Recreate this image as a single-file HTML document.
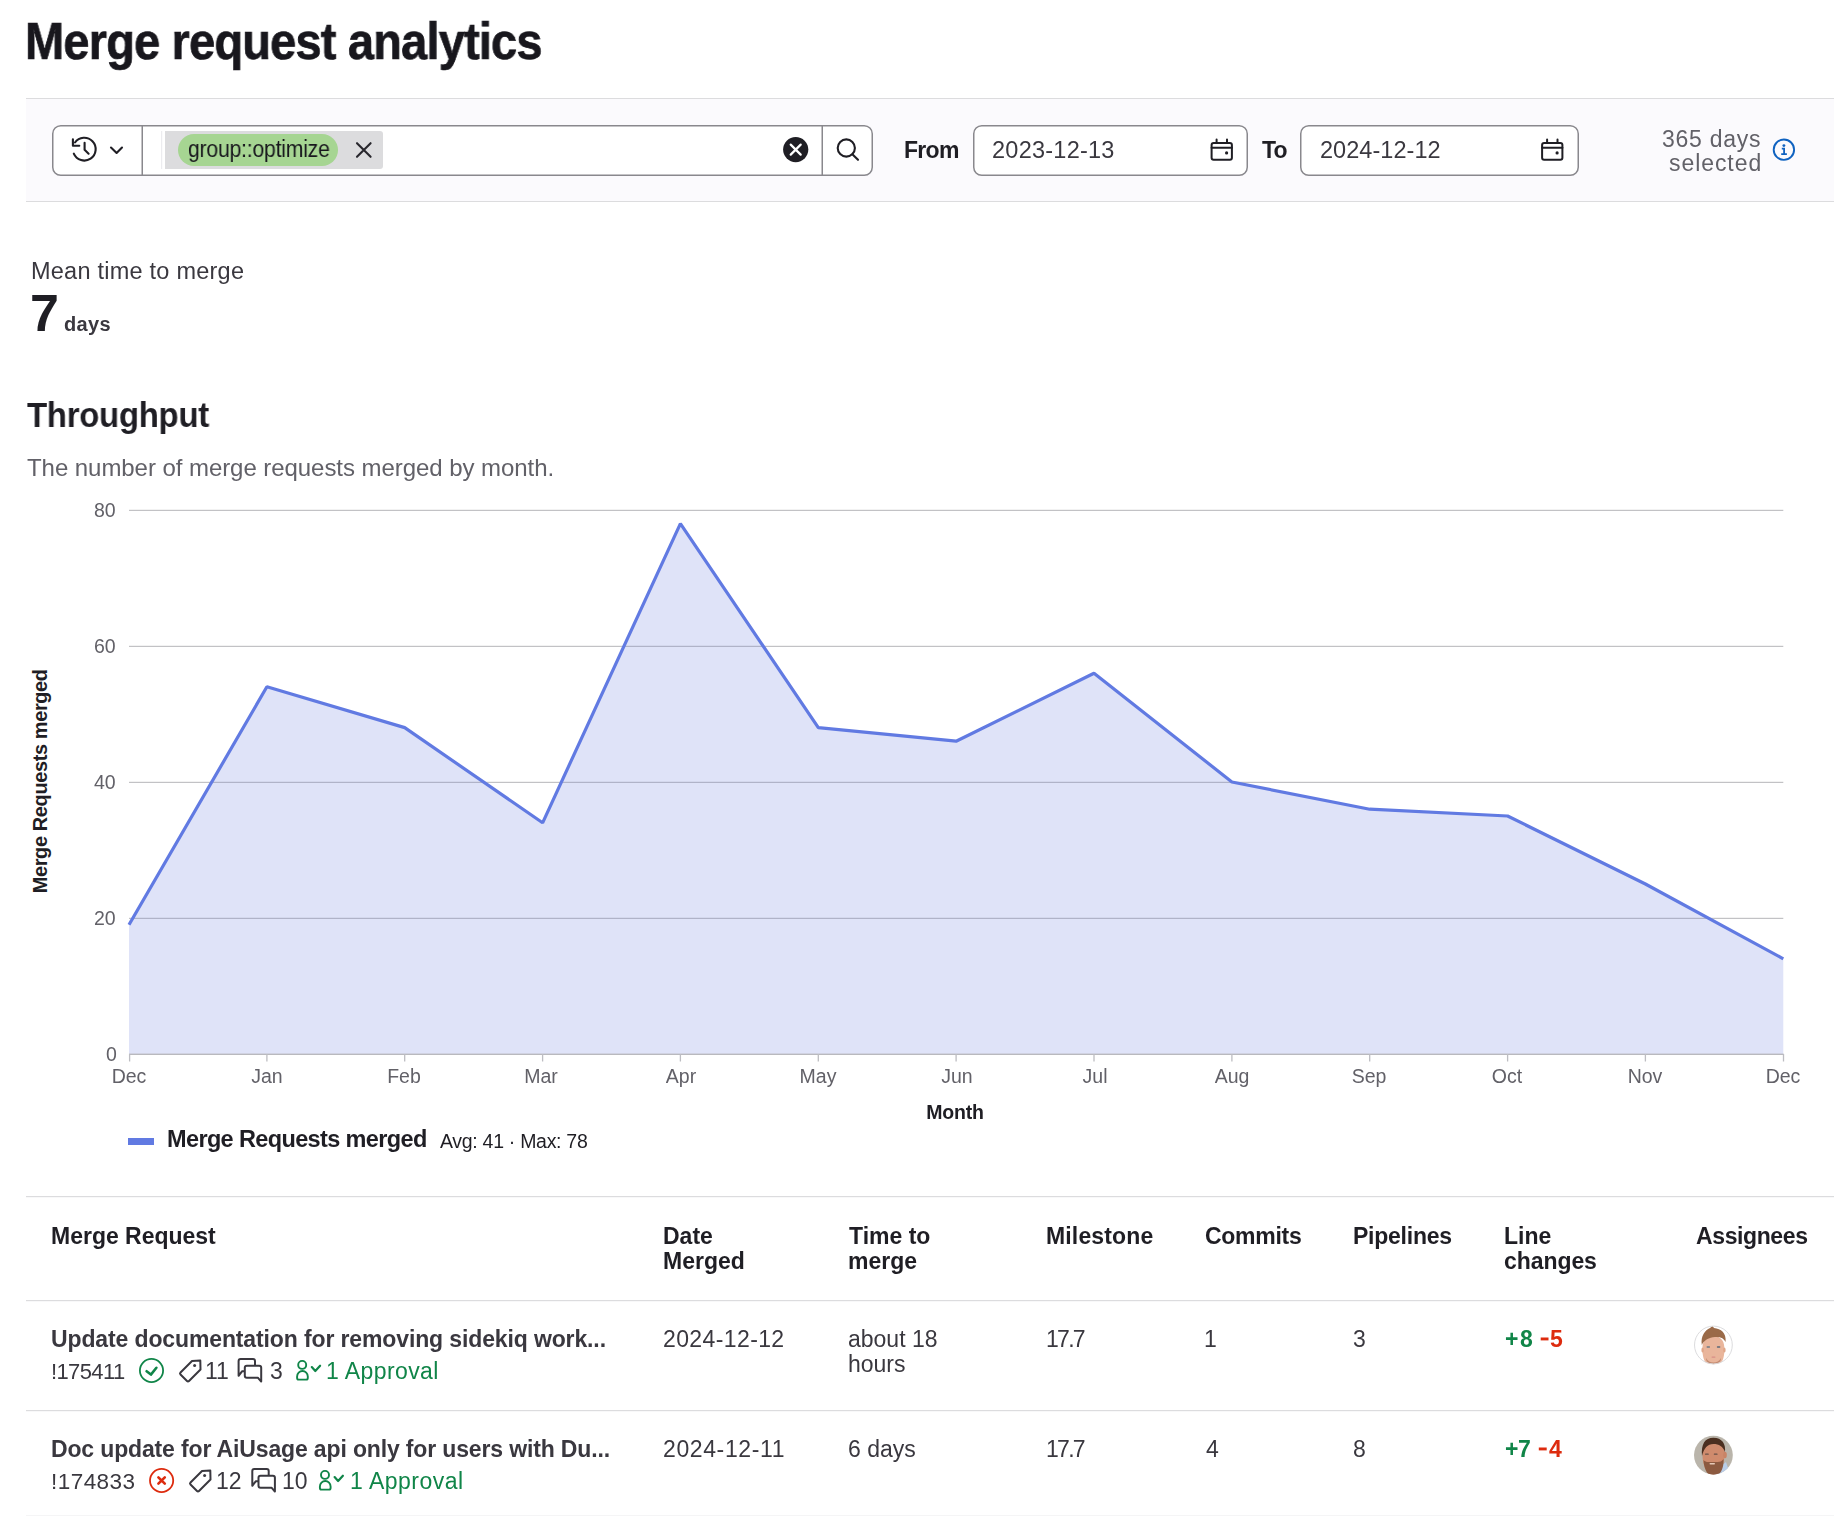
<!DOCTYPE html>
<html><head><meta charset="utf-8"><title>Merge request analytics</title>
<style>
html,body{margin:0;padding:0;background:#fff;}
body{width:1848px;height:1516px;position:relative;overflow:hidden;font-family:"Liberation Sans",sans-serif;}
.t{position:absolute;white-space:nowrap;line-height:1;will-change:transform;}
svg.bg{position:absolute;left:0;top:0;}
</style></head><body>
<svg class="bg" width="1848" height="1516" viewBox="0 0 1848 1516">
  <!-- filter bar -->
  <rect x="26" y="98" width="1808" height="104" fill="#fbfafd"/>
  <rect x="26" y="98" width="1808" height="1" fill="#dcdcde"/>
  <rect x="26" y="201" width="1808" height="1" fill="#dcdcde"/>
  <!-- filtered search box -->
  <rect x="52.75" y="125.75" width="819.5" height="49.5" rx="8" fill="#fff" stroke="#89888d" stroke-width="1.5"/>
  <rect x="141.5" y="126" width="1.5" height="49" fill="#89888d"/>
  <rect x="821.5" y="126" width="1.5" height="49" fill="#89888d"/>
  <!-- history icon -->
  <g fill="none" stroke="#1f1e24" stroke-width="2.1" stroke-linecap="round" stroke-linejoin="round">
    <path d="M73.8 153.7 A11.4 11.4 0 1 0 75 142.5"/>
    <path d="M72.9 139.3 V145.7 H79.3"/>
    <path d="M84.6 142.7 V149.7 L88.6 153.7"/>
    <path d="M111 147.6 L116.6 153 L122 147.6"/>
  </g>
  <!-- token -->
  <rect x="161" y="131" width="1.2" height="38" fill="#ececef"/>
  <rect x="165" y="131" width="218" height="38" rx="3" fill="#dcdcde"/>
  <rect x="165" y="131" width="6" height="38" fill="#dcdcde"/>
  <rect x="178" y="134" width="160" height="32" rx="16" fill="#a6d592"/>
  <g stroke="#28272d" stroke-width="2.1" stroke-linecap="round">
    <path d="M357 143.2 L370.6 156.8 M370.6 143.2 L357 156.8"/>
  </g>
  <!-- clear icon -->
  <circle cx="795.7" cy="149.6" r="12.6" fill="#1f1e24"/>
  <path d="M790.7 144.6 L800.7 154.6 M800.7 144.6 L790.7 154.6" stroke="#fff" stroke-width="2.2" stroke-linecap="round"/>
  <!-- search icon -->
  <g fill="none" stroke="#1f1e24" stroke-width="2.1" stroke-linecap="round">
    <circle cx="846.3" cy="148" r="8.6"/>
    <path d="M852.6 154.4 L858 159.8"/>
  </g>
  <!-- date inputs -->
  <rect x="973.75" y="125.75" width="273.5" height="49.5" rx="8" fill="#fff" stroke="#89888d" stroke-width="1.5"/>
  <rect x="1300.75" y="125.75" width="277.5" height="49.5" rx="8" fill="#fff" stroke="#89888d" stroke-width="1.5"/>
  <g fill="none" stroke="#1f1e24" stroke-width="2" stroke-linecap="round" stroke-linejoin="round">
    <rect x="1211.6" y="142.9" width="20.3" height="16.9" rx="2"/>
    <path d="M1211.6 147.7 H1231.9 M1216.6 139.6 V142.5 M1227 139.6 V142.5"/>
    <rect x="1542.1" y="142.9" width="20.3" height="16.9" rx="2"/>
    <path d="M1542.1 147.7 H1562.4 M1547.1 139.6 V142.5 M1557.5 139.6 V142.5"/>
  </g>
  <circle cx="1226.6" cy="152.9" r="1.6" fill="#1f1e24"/>
  <circle cx="1557.1" cy="152.9" r="1.6" fill="#1f1e24"/>
  <!-- info icon -->
  <circle cx="1783.9" cy="149.7" r="10.2" fill="none" stroke="#0f62c0" stroke-width="1.9"/>
  <circle cx="1783.9" cy="145.6" r="1.45" fill="#0f62c0"/>
  <path d="M1781.8 148.6 H1784.1 V154.2 M1781.2 154.2 H1786.9" fill="none" stroke="#0f62c0" stroke-width="1.8"/>

  <!-- chart gridlines -->
  <g fill="#bcbcbf">
    <rect x="129" y="509.8" width="1654.3" height="1.1"/>
    <rect x="129" y="645.8" width="1654.3" height="1.1"/>
    <rect x="129" y="781.8" width="1654.3" height="1.1"/>
    <rect x="129" y="917.8" width="1654.3" height="1.1"/>
  </g>
  <polygon fill="#dfe3f8" points="129,1054 129.0,924.8 266.9,686.8 404.7,727.6 542.6,822.8 680.4,523.6 818.3,727.6 956.1,741.2 1094.0,673.2 1231.9,782.0 1369.7,809.2 1507.6,816.0 1645.4,884.0 1783.3,958.8 1783.3,1054"/>
  <!-- gridlines inside area (darker) -->
  <clipPath id="areaclip"><polygon points="129,1054 129.0,924.8 266.9,686.8 404.7,727.6 542.6,822.8 680.4,523.6 818.3,727.6 956.1,741.2 1094.0,673.2 1231.9,782.0 1369.7,809.2 1507.6,816.0 1645.4,884.0 1783.3,958.8 1783.3,1054"/></clipPath>
  <g fill="#abadc3" clip-path="url(#areaclip)">
    <rect x="129" y="645.8" width="1654.3" height="1.1"/>
    <rect x="129" y="781.8" width="1654.3" height="1.1"/>
    <rect x="129" y="917.8" width="1654.3" height="1.1"/>
  </g>
  <g fill="#b9b9be">
    <rect x="129" y="1053.6" width="1654.6" height="1.4"/>
  </g>
  <g stroke="#bdbdc2" stroke-width="1.3">
    <path d="M129.6 1054 V1061.5 M266.9 1054 V1061.5 M404.7 1054 V1061.5 M542.6 1054 V1061.5 M680.4 1054 V1061.5 M818.3 1054 V1061.5 M956.1 1054 V1061.5 M1094 1054 V1061.5 M1231.9 1054 V1061.5 M1369.7 1054 V1061.5 M1507.6 1054 V1061.5 M1645.4 1054 V1061.5 M1783.5 1054 V1061.5"/>
  </g>
  <polyline fill="none" stroke="#617ae2" stroke-width="3.2" stroke-linejoin="bevel" points="129.0,924.8 266.9,686.8 404.7,727.6 542.6,822.8 680.4,523.6 818.3,727.6 956.1,741.2 1094.0,673.2 1231.9,782.0 1369.7,809.2 1507.6,816.0 1645.4,884.0 1783.3,958.8"/>
  <text x="46.6" y="781.3" transform="rotate(-90 46.6 781.3)" text-anchor="middle" font-family="Liberation Sans" font-weight="700" font-size="20" letter-spacing="-0.4" fill="#1f1e24">Merge Requests merged</text>
  <!-- legend swatch -->
  <rect x="128" y="1138" width="26" height="7" fill="#617ae2"/>

  <!-- table lines -->
  <rect x="26" y="1196" width="1808" height="1.2" fill="#dcdcde"/>
  <rect x="26" y="1300" width="1808" height="1.2" fill="#dcdcde"/>
  <rect x="26" y="1410" width="1808" height="1.2" fill="#dcdcde"/>
  <rect x="26" y="1515" width="1808" height="1" fill="#f5f5f6"/>

  <!-- minus signs -->
  <rect x="1540.7" y="1337.5" width="7.8" height="2.9" fill="#dd2b0e"/>
  <rect x="1538.8" y="1447.5" width="7.9" height="2.9" fill="#dd2b0e"/>
  <!-- row 1 meta icons -->
  <g fill="none" stroke="#108548" stroke-width="1.8">
    <circle cx="151.5" cy="1370.5" r="11.6"/>
  </g>
  <path d="M146.6 1371.2 L150.9 1374.6 L156.4 1367.8" fill="none" stroke="#108548" stroke-width="2.6" stroke-linecap="round" stroke-linejoin="round"/>
  <g id="lbl1">
  <path d="M200.3 1360.5 L192 1361 L180.5 1372.5 Q179.5 1373.5 180.5 1374.5 L187 1381 Q188 1382 189 1381 L200.5 1369.5 Z" fill="none" stroke="#3a383f" stroke-width="2" stroke-linejoin="round"/>
  <circle cx="194.6" cy="1365.6" r="1.5" fill="#3a383f"/>
  </g>
  <g id="cmt1" fill="none" stroke="#3a383f" stroke-width="2" stroke-linejoin="round">
    <path d="M244.8 1371.3 H242 L238.6 1375.8 V1361 Q238.6 1359 240.6 1359 H253 Q255 1359 255 1361 V1365.7"/>
    <path d="M246.8 1365.7 H259.2 Q261.2 1365.7 261.2 1367.7 V1381.6 L257.8 1377.7 H246.8 Q244.8 1377.7 244.8 1375.7 V1367.7 Q244.8 1365.7 246.8 1365.7 Z"/>
  </g>
  <g id="apr1" fill="none" stroke="#108548" stroke-width="1.9" stroke-linecap="round" stroke-linejoin="round">
    <circle cx="302.2" cy="1364.9" r="4.0"/>
    <path d="M297.1 1376.4 A5.35 5.35 0 0 1 307.8 1376.4 V1378 Q307.8 1379.6 306.2 1379.6 H298.7 Q297.1 1379.6 297.1 1378 Z"/>
    <path d="M311.8 1367.1 L315.3 1371 L320.1 1365.7" stroke-width="2.2"/>
  </g>

  <!-- row 2 meta icons -->
  <g fill="none" stroke="#dd2b0e" stroke-width="1.8">
    <circle cx="161.6" cy="1480.5" r="11.6"/>
  </g>
  <path d="M158.4 1477.3 L164.8 1483.7 M164.8 1477.3 L158.4 1483.7" fill="none" stroke="#dd2b0e" stroke-width="2.6" stroke-linecap="round"/>
  <use href="#lbl1" transform="translate(10 110)"/>
  <use href="#cmt1" transform="translate(13.7 110)"/>
  <use href="#apr1" transform="translate(22.8 110)"/>

  <!-- avatars -->
  <defs>
    <clipPath id="av1"><circle cx="1713.4" cy="1345" r="19.2"/></clipPath>
    <clipPath id="av2"><circle cx="1713.4" cy="1455.1" r="19.4"/></clipPath>
  </defs>
  <circle cx="1713.4" cy="1345" r="19.2" fill="#fff"/>
  <g clip-path="url(#av1)">
    <path d="M1702.5 1347 C1702 1356 1704 1362 1708 1364.5 H1719 C1723 1362 1724.8 1356 1724.3 1347 C1724 1340 1720 1336 1713.4 1336 C1707 1336 1703 1340 1702.5 1347 Z" fill="#e9b59b"/>
    <ellipse cx="1702.6" cy="1350" rx="1.2" ry="2.6" fill="#dfa688"/>
    <ellipse cx="1724.4" cy="1350" rx="1.2" ry="2.6" fill="#dfa688"/>
    <path d="M1706 1358 C1709 1364 1718 1364 1721 1358 C1721 1362 1718 1364.5 1713.4 1364.5 C1709 1364.5 1706 1362 1706 1358 Z" fill="#c48c72"/>
    <path d="M1701.8 1345 C1700.5 1336 1705 1330 1710 1328 L1712.5 1326 L1714 1328 C1721 1328.5 1726.5 1333 1725.6 1342 C1724 1338.5 1720.5 1336.5 1715 1337 C1709 1337.5 1704 1340 1701.8 1345 Z" fill="#9a6a48"/>
    <rect x="1706.5" y="1346.3" width="3.6" height="1.4" rx="0.7" fill="#6d7a86"/>
    <rect x="1716.8" y="1346.3" width="3.6" height="1.4" rx="0.7" fill="#5a6878"/>
    <rect x="1711.5" y="1356.5" width="4" height="1.2" rx="0.6" fill="#d88f86"/>
  </g>
  <circle cx="1713.4" cy="1345" r="18.9" fill="none" stroke="#dcdcde" stroke-width="1"/>
  <g clip-path="url(#av2)">
    <rect x="1690" y="1430" width="50" height="50" fill="#bab5ab"/>
    <path d="M1716 1470 L1726 1462 L1732 1480 H1712 Z" fill="#b9cee8"/>
    <path d="M1702.5 1452 C1702 1464 1706 1474 1713 1476 C1720 1474 1725 1464 1724.5 1452 C1724 1445 1720 1441 1713.4 1441 C1707 1441 1703 1445 1702.5 1452 Z" fill="#cf8b6d"/>
    <ellipse cx="1725" cy="1455" rx="1.8" ry="3.2" fill="#c98466"/>
    <path d="M1703.5 1460 C1704 1470 1708 1476 1713.5 1476.5 C1720 1476 1724 1469 1723.5 1459 C1721 1463 1718 1461.5 1713.5 1462 C1709 1461.5 1706 1463 1703.5 1460 Z" fill="#8c5a40"/>
    <rect x="1709.5" y="1463" width="5.5" height="1.6" rx="0.8" fill="#e6c9b8"/>
    <path d="M1702 1456 C1701 1444 1705 1437.8 1713.4 1437.8 C1722 1437.8 1726 1444 1725 1452 C1723 1446.5 1719 1444 1713.4 1444 C1707.5 1444 1704 1448 1702 1456 Z" fill="#4b2f20"/>
    <rect x="1705" y="1453.5" width="3.8" height="1.3" rx="0.6" fill="#6a5248"/>
    <rect x="1713.8" y="1453.5" width="3.8" height="1.3" rx="0.6" fill="#6a5248"/>
  </g>
</svg>
<div class="t" id="t0" style="top:15.81px;font-size:51.5px;font-weight:700;color:#18171d;letter-spacing:-0.900px;left:24.50px;transform:scaleX(0.9128);transform-origin:0 0;-webkit-text-stroke:0.7px #18171d;">Merge request analytics</div>
<div class="t" id="t1" style="top:137.83px;font-size:23px;font-weight:400;color:#18171d;letter-spacing:-0.200px;left:187.75px;transform:scaleX(0.9183);transform-origin:0 0;">group::optimize</div>
<div class="t" id="t2" style="top:139.33px;font-size:23px;font-weight:700;color:#1f1e24;letter-spacing:-0.700px;left:904.45px;">From</div>
<div class="t" id="t3" style="top:138.61px;font-size:23.5px;font-weight:400;color:#3a383f;letter-spacing:0.244px;left:991.85px;">2023-12-13</div>
<div class="t" id="t4" style="top:139.33px;font-size:23px;font-weight:700;color:#1f1e24;letter-spacing:-0.900px;left:1261.60px;">To</div>
<div class="t" id="t5" style="top:138.61px;font-size:23.5px;font-weight:400;color:#3a383f;letter-spacing:0.044px;left:1319.80px;">2024-12-12</div>
<div class="t" id="t6" style="top:127.63px;font-size:23px;font-weight:400;color:#626168;letter-spacing:0.729px;right:87.55px;margin-right:-0.729px;">365 days</div>
<div class="t" id="t7" style="top:152.43px;font-size:23px;font-weight:400;color:#626168;letter-spacing:0.929px;right:87.05px;margin-right:-0.929px;">selected</div>
<div class="t" id="t8" style="top:260.21px;font-size:23.5px;font-weight:400;color:#3a383f;letter-spacing:0.235px;left:30.65px;">Mean time to merge</div>
<div class="t" id="t9" style="top:287.48px;font-size:52px;font-weight:700;color:#1f1e24;left:30.25px;">7</div>
<div class="t" id="t10" style="top:313.87px;font-size:20px;font-weight:700;color:#3a383f;letter-spacing:0.367px;left:63.80px;">days</div>
<div class="t" id="t11" style="top:397.47px;font-size:35px;font-weight:700;color:#1f1e24;letter-spacing:-0.300px;left:27.25px;transform:scaleX(0.9409);transform-origin:0 0;">Throughput</div>
<div class="t" id="t12" style="top:456.28px;font-size:24px;font-weight:400;color:#626168;letter-spacing:-0.057px;left:27.25px;">The number of merge requests merged by month.</div>
<div class="t" id="t13" style="top:501.29px;font-size:19.5px;font-weight:400;color:#626168;right:1732.60px;">80</div>
<div class="t" id="t14" style="top:637.29px;font-size:19.5px;font-weight:400;color:#626168;right:1732.60px;">60</div>
<div class="t" id="t15" style="top:773.29px;font-size:19.5px;font-weight:400;color:#626168;right:1732.60px;">40</div>
<div class="t" id="t16" style="top:909.29px;font-size:19.5px;font-weight:400;color:#626168;right:1732.60px;">20</div>
<div class="t" id="t17" style="top:1045.29px;font-size:19.5px;font-weight:400;color:#626168;right:1731.60px;">0</div>
<div class="t" id="t18" style="top:1067.29px;font-size:19.5px;font-weight:400;color:#626168;left:128.50px;transform:translateX(-50%);">Dec</div>
<div class="t" id="t19" style="top:1067.29px;font-size:19.5px;font-weight:400;color:#626168;left:266.93px;transform:translateX(-50%);">Jan</div>
<div class="t" id="t20" style="top:1067.29px;font-size:19.5px;font-weight:400;color:#626168;left:404.37px;transform:translateX(-50%);">Feb</div>
<div class="t" id="t21" style="top:1067.29px;font-size:19.5px;font-weight:400;color:#626168;left:541.30px;transform:translateX(-50%);">Mar</div>
<div class="t" id="t22" style="top:1067.29px;font-size:19.5px;font-weight:400;color:#626168;left:680.73px;transform:translateX(-50%);">Apr</div>
<div class="t" id="t23" style="top:1067.29px;font-size:19.5px;font-weight:400;color:#626168;left:817.67px;transform:translateX(-50%);">May</div>
<div class="t" id="t24" style="top:1067.29px;font-size:19.5px;font-weight:400;color:#626168;left:957.10px;transform:translateX(-50%);">Jun</div>
<div class="t" id="t25" style="top:1067.29px;font-size:19.5px;font-weight:400;color:#626168;left:1094.53px;transform:translateX(-50%);">Jul</div>
<div class="t" id="t26" style="top:1067.29px;font-size:19.5px;font-weight:400;color:#626168;left:1231.97px;transform:translateX(-50%);">Aug</div>
<div class="t" id="t27" style="top:1067.29px;font-size:19.5px;font-weight:400;color:#626168;left:1369.40px;transform:translateX(-50%);">Sep</div>
<div class="t" id="t28" style="top:1067.29px;font-size:19.5px;font-weight:400;color:#626168;left:1506.83px;transform:translateX(-50%);">Oct</div>
<div class="t" id="t29" style="top:1067.29px;font-size:19.5px;font-weight:400;color:#626168;left:1645.27px;transform:translateX(-50%);">Nov</div>
<div class="t" id="t30" style="top:1067.29px;font-size:19.5px;font-weight:400;color:#626168;left:1782.70px;transform:translateX(-50%);">Dec</div>
<div class="t" id="t31" style="top:1102.89px;font-size:19.5px;font-weight:700;color:#1f1e24;letter-spacing:-0.150px;left:955.25px;transform:translateX(-50%);">Month</div>
<div class="t" id="t32" style="top:1128.41px;font-size:23.5px;font-weight:700;color:#1f1e24;letter-spacing:-0.635px;left:167.15px;">Merge Requests merged</div>
<div class="t" id="t33" style="top:1132.09px;font-size:19.5px;font-weight:400;color:#1f1e24;letter-spacing:-0.294px;left:440.10px;">Avg: 41 · Max: 78</div>
<div class="t" id="t34" style="top:1225.13px;font-size:23px;font-weight:700;color:#1f1e24;letter-spacing:-0.008px;left:50.85px;">Merge Request</div>
<div class="t" id="t35" style="top:1225.13px;font-size:23px;font-weight:700;color:#1f1e24;left:662.60px;">Date</div>
<div class="t" id="t36" style="top:1250.23px;font-size:23px;font-weight:700;color:#1f1e24;left:662.60px;">Merged</div>
<div class="t" id="t37" style="top:1225.13px;font-size:23px;font-weight:700;color:#1f1e24;left:848.80px;">Time to</div>
<div class="t" id="t38" style="top:1250.23px;font-size:23px;font-weight:700;color:#1f1e24;left:847.80px;">merge</div>
<div class="t" id="t39" style="top:1225.13px;font-size:23px;font-weight:700;color:#1f1e24;letter-spacing:0.150px;left:1046.45px;">Milestone</div>
<div class="t" id="t40" style="top:1225.13px;font-size:23px;font-weight:700;color:#1f1e24;letter-spacing:-0.283px;left:1204.50px;">Commits</div>
<div class="t" id="t41" style="top:1225.13px;font-size:23px;font-weight:700;color:#1f1e24;letter-spacing:-0.237px;left:1352.90px;">Pipelines</div>
<div class="t" id="t42" style="top:1225.13px;font-size:23px;font-weight:700;color:#1f1e24;left:1504.40px;">Line</div>
<div class="t" id="t43" style="top:1250.23px;font-size:23px;font-weight:700;color:#1f1e24;letter-spacing:-0.067px;left:1503.85px;">changes</div>
<div class="t" id="t44" style="top:1225.13px;font-size:23px;font-weight:700;color:#1f1e24;letter-spacing:-0.388px;left:1695.60px;">Assignees</div>
<div class="t" id="t45" style="top:1328.03px;font-size:23px;font-weight:700;color:#3a383f;letter-spacing:-0.125px;left:50.85px;">Update documentation for removing sidekiq work...</div>
<div class="t" id="t46" style="top:1328.03px;font-size:23px;font-weight:400;color:#3a383f;letter-spacing:0.389px;left:663.15px;">2024-12-12</div>
<div class="t" id="t47" style="top:1328.03px;font-size:23px;font-weight:400;color:#3a383f;left:847.80px;">about 18</div>
<div class="t" id="t48" style="top:1353.23px;font-size:23px;font-weight:400;color:#3a383f;left:847.80px;">hours</div>
<div class="t" id="t49" style="top:1328.03px;font-size:23px;font-weight:400;color:#3a383f;letter-spacing:-1.700px;left:1045.95px;">17.7</div>
<div class="t" id="t50" style="top:1328.03px;font-size:23px;font-weight:400;color:#3a383f;left:1204.00px;">1</div>
<div class="t" id="t51" style="top:1328.03px;font-size:23px;font-weight:400;color:#3a383f;left:1353.00px;">3</div>
<div class="t" id="t52" style="top:1438.03px;font-size:23px;font-weight:700;color:#3a383f;letter-spacing:-0.147px;left:50.85px;">Doc update for AiUsage api only for users with Du...</div>
<div class="t" id="t53" style="top:1438.03px;font-size:23px;font-weight:400;color:#3a383f;letter-spacing:0.611px;left:663.15px;">2024-12-11</div>
<div class="t" id="t54" style="top:1438.03px;font-size:23px;font-weight:400;color:#3a383f;left:847.80px;">6 days</div>
<div class="t" id="t55" style="top:1438.03px;font-size:23px;font-weight:400;color:#3a383f;letter-spacing:-1.700px;left:1045.95px;">17.7</div>
<div class="t" id="t56" style="top:1438.03px;font-size:23px;font-weight:400;color:#3a383f;left:1206.00px;">4</div>
<div class="t" id="t57" style="top:1438.03px;font-size:23px;font-weight:400;color:#3a383f;left:1353.00px;">8</div>
<div class="t" id="t58" style="top:1360.98px;font-size:22px;font-weight:400;color:#3a383f;letter-spacing:-0.617px;left:51.05px;">!175411</div>
<div class="t" id="t59" style="top:1360.13px;font-size:23px;font-weight:400;color:#3a383f;left:204.60px;">11</div>
<div class="t" id="t60" style="top:1360.13px;font-size:23px;font-weight:400;color:#3a383f;left:269.80px;">3</div>
<div class="t" id="t61" style="top:1360.13px;font-size:23px;font-weight:400;color:#108548;letter-spacing:0.411px;left:326.30px;">1 Approval</div>
<div class="t" id="t62" style="top:1470.55px;font-size:22.5px;font-weight:400;color:#3a383f;letter-spacing:0.450px;left:51.35px;">!174833</div>
<div class="t" id="t63" style="top:1470.13px;font-size:23px;font-weight:400;color:#3a383f;left:215.60px;">12</div>
<div class="t" id="t64" style="top:1470.13px;font-size:23px;font-weight:400;color:#3a383f;left:282.00px;">10</div>
<div class="t" id="t65" style="top:1470.13px;font-size:23px;font-weight:400;color:#108548;letter-spacing:0.500px;left:349.65px;">1 Approval</div>
<div class="t" id="t66" style="top:1328.03px;font-size:23px;font-weight:700;color:#108548;letter-spacing:1.600px;left:1504.80px;">+8</div>
<div class="t" id="t67" style="top:1328.03px;font-size:23px;font-weight:700;color:#dd2b0e;left:1550.20px;">5</div>
<div class="t" id="t68" style="top:1438.03px;font-size:23px;font-weight:700;color:#108548;letter-spacing:-0.400px;left:1504.80px;">+7</div>
<div class="t" id="t69" style="top:1438.03px;font-size:23px;font-weight:700;color:#dd2b0e;left:1549.40px;">4</div>
</body></html>
